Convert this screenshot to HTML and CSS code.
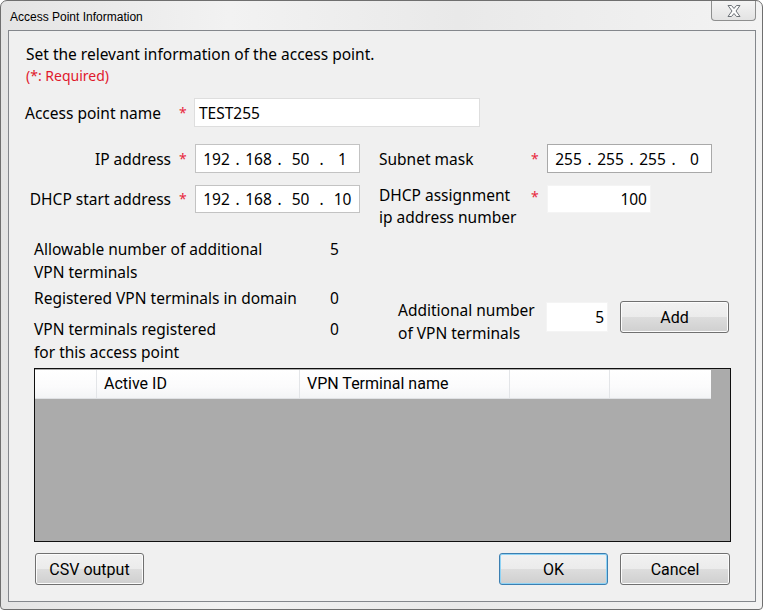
FILE: index.html
```html
<!DOCTYPE html>
<html>
<head>
<meta charset="utf-8">
<link rel="stylesheet" href="styles.css">
</head>
<body>
<div class="window">
  <div class="titlebar">
    <span class="title">Access Point Information</span>
    <div class="close">
      <svg width="16" height="14" viewBox="0 0 16 14"><path d="M2 1.5 L5.5 1.5 L8 4.5 L10.5 1.5 L14 1.5 L10 7 L14 12.5 L10.5 12.5 L8 9.5 L5.5 12.5 L2 12.5 L6 7 Z" fill="#fdfdfd" stroke="#6d7278" stroke-width="1" stroke-linejoin="round"/></svg>
    </div>
  </div>
  <div class="client">
    <div class="intro">Set the relevant information of the access point.</div>
    <div class="required">(*: Required)</div>

    <div class="name-row">
      <span class="name-label">Access point name</span>
      <span class="star">*</span>
      <div class="field field-name">TEST255</div>
    </div>

    <div class="addr-grid">
      <span class="lbl lbl-right">IP address</span>
      <span class="star star-l">*</span>
      <div class="field ip ip-a">
        <span class="seg">192</span><span class="dot">.</span><span class="seg">168</span><span class="dot">.</span><span class="seg">50</span><span class="dot">.</span><span class="seg">1</span>
      </div>
      <span class="lbl lbl-left">Subnet mask</span>
      <span class="star star-r">*</span>
      <div class="field ip ip-mask">
        <span class="seg">255</span><span class="dot">.</span><span class="seg">255</span><span class="dot">.</span><span class="seg">255</span><span class="dot">.</span><span class="seg">0</span>
      </div>

      <span class="lbl lbl-right row2">DHCP start address</span>
      <span class="star star-l row2">*</span>
      <div class="field ip ip-a row2">
        <span class="seg">192</span><span class="dot">.</span><span class="seg">168</span><span class="dot">.</span><span class="seg">50</span><span class="dot">.</span><span class="seg">10</span>
      </div>
      <span class="lbl lbl-left lbl-two">DHCP assignment<br>ip address number</span>
      <span class="star star-r star-top">*</span>
      <div class="field num num-assign row2">100</div>
    </div>

    <div class="stats">
      <div class="stat-list">
        <div class="stat"><span class="stat-label">Allowable number of additional<br>VPN terminals</span><span class="stat-val">5</span></div>
        <div class="stat stat-2"><span class="stat-label">Registered VPN terminals in domain</span><span class="stat-val">0</span></div>
        <div class="stat stat-3"><span class="stat-label">VPN terminals registered<br>for this access point</span><span class="stat-val">0</span></div>
      </div>
      <div class="add-box">
        <span class="add-label">Additional number<br>of VPN terminals</span>
        <div class="field num num-add">5</div>
        <button class="btn btn-add">Add</button>
      </div>
    </div>

    <div class="table">
      <div class="thead">
        <div class="th th-1"></div>
        <div class="th th-2">Active ID</div>
        <div class="th th-3">VPN Terminal name</div>
        <div class="th th-4"></div>
        <div class="th th-5"></div>
      </div>
    </div>

    <div class="footer">
      <button class="btn btn-csv">CSV output</button>
      <div class="footer-right">
        <button class="btn btn-ok">OK</button>
        <button class="btn btn-cancel">Cancel</button>
      </div>
    </div>
  </div>
</div>
</body>
</html>
```

FILE: styles.css
```css
html, body {
  margin: 0;
  padding: 0;
  width: 763px;
  height: 610px;
  overflow: hidden;
  background: #ffffff;
}

.window {
  box-sizing: border-box;
  width: 763px;
  height: 610px;
  border: 1px solid #6f6f6f;
  border-radius: 7px 7px 4px 4px;
  background: linear-gradient(90deg, #e4e4e4 0%, #f2f2f2 30%, #e9e9e9 60%, #f3f3f3 100%);
  padding: 0 6px 7px 7px;
  display: flex;
  flex-direction: column;
  font-family: "Noto Sans", "Liberation Sans", sans-serif;
  color: #000;
}

.titlebar {
  height: 29px;
  display: flex;
  align-items: flex-start;
  justify-content: space-between;
}

.title {
  font-family: "Liberation Sans", sans-serif;
  font-size: 12px;
  padding-left: 2px;
  margin-top: 9px;
  color: #000;
}

.close {
  width: 43px;
  height: 19px;
  border: 1px solid #8e8f8f;
  border-top: none;
  border-radius: 0 0 4px 4px;
  background: linear-gradient(#f4f4f4, #e3e3e3);
  display: flex;
  align-items: center;
  justify-content: center;
}

.client {
  flex: 1;
  border: 1px solid #84878c;
  background: #f0f0f0;
  padding-left: 16px;
  font-size: 15.5px;
  display: flex;
  flex-direction: column;
}

.intro {
  margin-top: 13px;
  line-height: 20px;
  padding-left: 1px;
}

.required {
  margin-top: 3px;
  line-height: 18px;
  font-size: 14px;
  color: #e0182c;
  padding-left: 1px;
}

.star {
  color: #e8283c;
  font-size: 14px;
}

.field {
  box-sizing: border-box;
  background: #fff;
  border: 1px solid #dedede;
  display: flex;
  align-items: center;
}

.name-row {
  margin-top: 13px;
  display: flex;
  align-items: center;
  height: 29px;
}

.name-label {
  width: 154px;
}

.name-row .star {
  width: 15px;
}

.field-name {
  width: 286px;
  height: 29px;
  padding-left: 4px;
}

.addr-grid {
  margin-top: 17px;
  display: grid;
  grid-template-columns: 148px 22px 165px 171px 16px 165px;
  grid-template-rows: 29px 44px;
  row-gap: 11px;
  align-items: center;
}

.lbl-right {
  text-align: right;
  padding-right: 2px;
}

.lbl-left {
  padding-left: 19px;
}

.star-l {
  padding-left: 6px;
}

.star-r {
  padding-left: 0;
}

.ip {
  height: 29px;
  padding-left: 4px;
}

.ip-a {
  border-color: #c3c3c3;
}

.ip-mask {
  border-color: #a9a9a9;
}

.seg {
  width: 33px;
  text-align: center;
}

.dot {
  width: 9px;
  text-align: center;
}

.row2 {
  align-self: start;
  margin-top: 1px;
  line-height: 28px;
}

.ip.row2 {
  height: 28px;
}

.lbl-two {
  align-self: start;
  line-height: 22px;
}

.star-top {
  align-self: start;
  margin-top: 3px;
}

.num {
  height: 28px;
  justify-content: flex-end;
  padding-right: 3px;
  border-color: #f4f4f4;
}

.num-assign {
  width: 104px;
}

.stats {
  margin-top: 10px;
  display: flex;
  align-items: flex-start;
}

.stat-list {
  width: 364px;
  padding-left: 9px;
}

.stat {
  display: flex;
  line-height: 23px;
}

.stat-2 {
  margin-top: 3px;
}

.stat-3 {
  margin-top: 8px;
}

.stat-label {
  width: 296px;
}

.add-box {
  margin-top: 61px;
  display: flex;
  align-items: flex-start;
}

.add-label {
  width: 148px;
  line-height: 23px;
}

.num-add {
  width: 62px;
  height: 30px;
  margin-top: 3px;
}

.btn {
  box-sizing: border-box;
  font-family: Roboto, "Liberation Sans", sans-serif;
  font-size: 16px;
  color: #000;
  border: 1px solid #707070;
  border-radius: 3px;
  background: linear-gradient(#f2f2f2 0%, #ebebeb 50%, #dddddd 50%, #cfcfcf 100%);
  padding: 0;
  height: 32px;
  box-shadow: inset 0 0 0 1px #fcfcfc;
}

.btn-add {
  width: 109px;
  margin-left: 12px;
  margin-top: 2px;
}

.table {
  box-sizing: border-box;
  margin-top: 4px;
  margin-left: 9px;
  width: 697px;
  height: 174px;
  border: 1px solid #0f0f0f;
  background: #ababab;
  padding-top: 1px;
}

.thead {
  display: flex;
  width: 676px;
  height: 28px;
  background: linear-gradient(#ffffff, #fbfbfc 60%, #f3f4f6);
  border-bottom: 1px solid #dfe1e4;
  font-family: Roboto, "Liberation Sans", sans-serif;
  font-size: 16px;
}

.th {
  box-sizing: border-box;
  border-right: 1px solid #e3e5e8;
  padding-left: 7px;
  line-height: 27px;
}

.th-1 { width: 62px; }
.th-2 { width: 203px; }
.th-3 { width: 210px; }
.th-4 { width: 100px; }
.th-5 { width: 101px; border-right: none; }

.footer {
  margin-top: 11px;
  display: flex;
  justify-content: space-between;
  width: 695px;
  margin-left: 10px;
}

.footer-right {
  display: flex;
  gap: 12px;
}

.btn-csv { width: 109px; }
.btn-ok {
  width: 109px;
  border-color: #3c7fb1;
  box-shadow: inset 0 0 0 1px #8fd3f5;
}
.btn-cancel { width: 110px; }
```
